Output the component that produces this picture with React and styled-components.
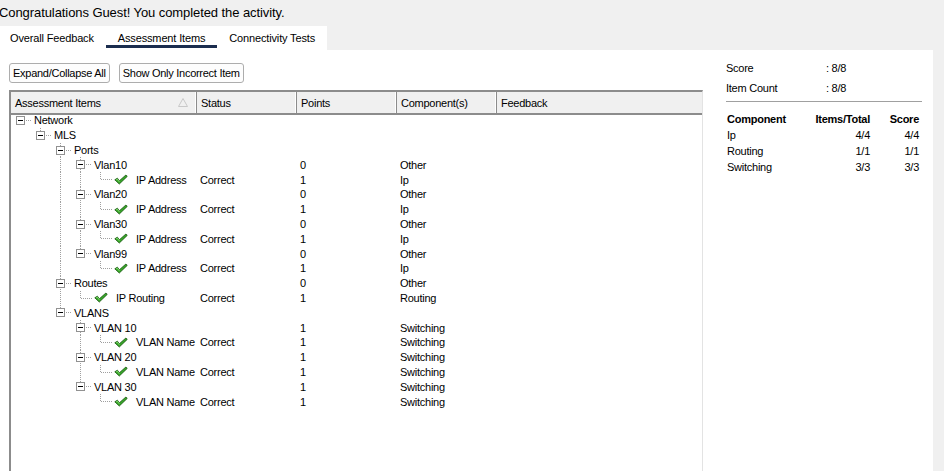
import React from 'react'
import { styled, createGlobalStyle } from 'styled-components'

const GlobalStyle = createGlobalStyle`
  html, body {
    margin: 0;
    padding: 0;
    background-color: #f0f0f0;
    overflow: hidden;
  }
  body {
    font-family: "Liberation Sans", Arial, sans-serif;
    color: #000;
  }
`

const tree = {
  label: 'Network',
  children: [
    {
      label: 'MLS',
      children: [
        {
          label: 'Ports',
          children: [
            { label: 'Vlan10', points: '0', comp: 'Other', children: [{ label: 'IP Address', leaf: true, status: 'Correct', points: '1', comp: 'Ip' }] },
            { label: 'Vlan20', points: '0', comp: 'Other', children: [{ label: 'IP Address', leaf: true, status: 'Correct', points: '1', comp: 'Ip' }] },
            { label: 'Vlan30', points: '0', comp: 'Other', children: [{ label: 'IP Address', leaf: true, status: 'Correct', points: '1', comp: 'Ip' }] },
            { label: 'Vlan99', points: '0', comp: 'Other', children: [{ label: 'IP Address', leaf: true, status: 'Correct', points: '1', comp: 'Ip' }] },
          ],
        },
        {
          label: 'Routes',
          points: '0',
          comp: 'Other',
          children: [{ label: 'IP Routing', leaf: true, status: 'Correct', points: '1', comp: 'Routing' }],
        },
        {
          label: 'VLANS',
          children: [
            { label: 'VLAN 10', points: '1', comp: 'Switching', children: [{ label: 'VLAN Name', leaf: true, status: 'Correct', points: '1', comp: 'Switching' }] },
            { label: 'VLAN 20', points: '1', comp: 'Switching', children: [{ label: 'VLAN Name', leaf: true, status: 'Correct', points: '1', comp: 'Switching' }] },
            { label: 'VLAN 30', points: '1', comp: 'Switching', children: [{ label: 'VLAN Name', leaf: true, status: 'Correct', points: '1', comp: 'Switching' }] },
          ],
        },
      ],
    },
  ],
}

// flatten the tree into rows, keeping which ancestor lines keep going down
function flatten(node, level, guides, isLast, out) {
  out.push({ ...node, level, guides, isLast, isRoot: level === 0 })
  const kids = node.children || []
  kids.forEach((kid, i) => {
    flatten(kid, level + 1, [...guides, !isLast], i === kids.length - 1, out)
  })
  return out
}

const rows = flatten(tree, 0, [], true, [])

const summary = [
  { name: 'Ip', items: '4/4', score: '4/4' },
  { name: 'Routing', items: '1/1', score: '1/1' },
  { name: 'Switching', items: '3/3', score: '3/3' },
]

const CheckIcon = () => (
  <svg width="14" height="11" viewBox="0 0 14 11">
    <path d="M0.8 5.8 L3.4 4.2 L5.4 6.8 L11.9 1 L13.2 2.4 L5.3 10 Z" fill="#37a828" stroke="#1e5e16" strokeWidth="0.9" strokeLinejoin="round" />
    <path d="M2.2 5.7 L3.3 5.1 L5.4 7.9" fill="none" stroke="#8fe27c" strokeWidth="0.8" />
  </svg>
)

const SortArrow = () => (
  <svg width="10" height="9" viewBox="0 0 10 9">
    <path d="M5 0.5 L9.5 8.5 L0.5 8.5 Z" fill="none" stroke="#c8c8c8" strokeWidth="1" />
  </svg>
)

export default function App() {
  return (
    <Page>
      <GlobalStyle />
      <Title>Congratulations Guest! You completed the activity.</Title>
      <TabBar>
        <Tabs>
          <Tab $first>Overall Feedback</Tab>
          <Tab $active>Assessment Items</Tab>
          <Tab>Connectivity Tests</Tab>
        </Tabs>
      </TabBar>
      <Panel>
        <Main>
          <Toolbar>
            <Button>Expand/Collapse All</Button>
            <Button>Show Only Incorrect Item</Button>
          </Toolbar>
          <Table>
            <HeadRow>
              <HeadCell>
                Assessment Items
                <SortSlot><SortArrow /></SortSlot>
              </HeadCell>
              <HeadCell>Status</HeadCell>
              <HeadCell>Points</HeadCell>
              <HeadCell>Component(s)</HeadCell>
              <HeadCell $last>Feedback</HeadCell>
            </HeadRow>
            <Body>
              {rows.map((r, i) => (
                <Row key={i}>
                  <TreeCell>
                    {r.guides.map((g, j) => (
                      <Indent key={j}>{g && <VLine $full />}</Indent>
                    ))}
                    <Joint>
                      {!r.isRoot && <VLine $top />}
                      {!r.isLast && <VLine $bottom />}
                      <HLine $leaf={r.leaf} />
                      {!r.leaf && <Expander />}
                    </Joint>
                    {r.leaf && <CheckSlot><CheckIcon /></CheckSlot>}
                    <Label $leaf={r.leaf}>{r.label}</Label>
                  </TreeCell>
                  <Cell>{r.status}</Cell>
                  <Cell>{r.points}</Cell>
                  <Cell>{r.comp}</Cell>
                  <Cell />
                </Row>
              ))}
            </Body>
          </Table>
        </Main>
        <Side>
          <InfoRow>
            <InfoLabel>Score</InfoLabel>
            <span>: 8/8</span>
          </InfoRow>
          <InfoRow>
            <InfoLabel>Item Count</InfoLabel>
            <span>: 8/8</span>
          </InfoRow>
          <Divider />
          <SumGrid>
            <SumHead>Component</SumHead>
            <SumHead $right>Items/Total</SumHead>
            <SumHead $right>Score</SumHead>
            {summary.map((s) => (
              <React.Fragment key={s.name}>
                <SumCell>{s.name}</SumCell>
                <SumCell $right>{s.items}</SumCell>
                <SumCell $right>{s.score}</SumCell>
              </React.Fragment>
            ))}
          </SumGrid>
        </Side>
      </Panel>
    </Page>
  )
}

const Page = styled.div`
  width: 944px;
  height: 471px;
  display: flex;
  flex-direction: column;
  overflow: hidden;
  font-size: 11px;
  letter-spacing: -0.25px;
`
const Title = styled.div`
  height: 26px;
  line-height: 26px;
  margin-left: -1px;
  font-size: 13px;
  letter-spacing: -0.08px;
  white-space: nowrap;
`
const TabBar = styled.div`
  height: 24px;
  display: flex;
`
const Tabs = styled.div`
  display: flex;
  background-color: #fff;
`
const Tab = styled.div`
  height: 24px;
  line-height: 24px;
  padding: 0 12px 0 ${(p) => (p.$first ? '10px' : '12px')};
  box-sizing: border-box;
  white-space: nowrap;
  letter-spacing: -0.15px;
  position: relative;
  &::after {
    content: '';
    display: ${(p) => (p.$active ? 'block' : 'none')};
    position: absolute;
    left: 0;
    right: 0;
    bottom: 2px;
    height: 3px;
    background-color: #1b2d4e;
  }
`
const Panel = styled.div`
  flex: 1;
  display: flex;
  background-color: #fff;
  margin-right: 11px;
  min-height: 0;
`
const Main = styled.div`
  width: 694px;
  margin-left: 9px;
  display: flex;
  flex-direction: column;
`
const Toolbar = styled.div`
  display: flex;
  gap: 9px;
  padding: 13px 0 7px;
`
const Button = styled.button`
  height: 20px;
  padding: 0 3px;
  border: 1px solid #adadad;
  border-radius: 3px;
  background-color: #fdfdfd;
  font-family: inherit;
  font-size: 11px;
  letter-spacing: -0.27px;
  color: #000;
  cursor: pointer;
`
const Table = styled.div`
  flex: 1;
  display: flex;
  flex-direction: column;
  border-top: 2px solid #8c8c8c;
  border-left: 2px solid #8c8c8c;
  border-right: 1px solid #e3e3e3;
`
const HeadRow = styled.div`
  display: grid;
  grid-template-columns: 186px 100px 100px 100px 1fr;
  height: 21px;
  background-color: #f0f0f0;
  border-bottom: 2px solid #8c8c8c;
`
const HeadCell = styled.div`
  display: flex;
  align-items: center;
  padding-left: 4px;
  border-right: ${(p) => (p.$last ? '0' : '1px solid #8c8c8c')};
  box-shadow: ${(p) => (p.$last ? 'none' : 'inset -1px 0 0 #fff')};
  white-space: nowrap;
`
const SortSlot = styled.span`
  display: flex;
  margin-left: auto;
  margin-right: 8px;
`
const Body = styled.div`
  margin-top: -2px;
`
const Row = styled.div`
  display: grid;
  grid-template-columns: 186px 100px 100px 100px 1fr;
  height: 14.8px;
  align-items: center;
`
const TreeCell = styled.div`
  display: flex;
  align-items: center;
  height: 100%;
  white-space: nowrap;
`
const Indent = styled.span`
  position: relative;
  width: 20px;
  height: 100%;
  flex: none;
`
const Joint = styled.span`
  position: relative;
  width: 20px;
  height: 100%;
  flex: none;
`
const dots = 'repeating-linear-gradient(to bottom, #a0a0a0 0 1px, transparent 1px 2px)'
const VLine = styled.span`
  position: absolute;
  left: 9px;
  width: 1px;
  background: ${dots};
  top: ${(p) => (p.$bottom ? '50%' : '0')};
  bottom: ${(p) => (p.$top ? '50%' : '0')};
`
const HLine = styled.span`
  position: absolute;
  top: 7px;
  left: ${(p) => (p.$leaf ? '10px' : '15px')};
  right: ${(p) => (p.$leaf ? '-1px' : '0')};
  height: 1px;
  background: repeating-linear-gradient(to right, #a0a0a0 0 1px, transparent 1px 2px);
`
const Expander = styled.span`
  position: absolute;
  left: 5px;
  top: 3px;
  width: 7px;
  height: 7px;
  border: 1px solid #919191;
  background-color: #fff;
  display: flex;
  align-items: center;
  justify-content: center;
  &::before {
    content: '';
    width: 5px;
    height: 1px;
    background-color: #000;
  }
`
const CheckSlot = styled.span`
  display: flex;
  margin-left: 3px;
  flex: none;
`
const Label = styled.span`
  margin-left: ${(p) => (p.$leaf ? '8px' : '3px')};
`
const Cell = styled.div`
  padding-left: 3px;
  white-space: nowrap;
`
const Side = styled.div`
  flex: 1;
  padding: 12px 11px 0 23px;
`
const InfoRow = styled.div`
  display: flex;
  height: 20px;
  line-height: 13px;
`
const InfoLabel = styled.span`
  width: 100px;
`
const Divider = styled.div`
  height: 1px;
  background-color: #a0a0a0;
  margin: -1px 0 11px;
`
const SumGrid = styled.div`
  display: grid;
  grid-template-columns: 72px 71px 49px;
  row-gap: 3px;
  line-height: 13px;
  padding-left: 1px;
`
const SumHead = styled.div`
  font-weight: bold;
  font-size: 11px;
  text-align: ${(p) => (p.$right ? 'right' : 'left')};
  white-space: nowrap;
`
const SumCell = styled.div`
  text-align: ${(p) => (p.$right ? 'right' : 'left')};
`
